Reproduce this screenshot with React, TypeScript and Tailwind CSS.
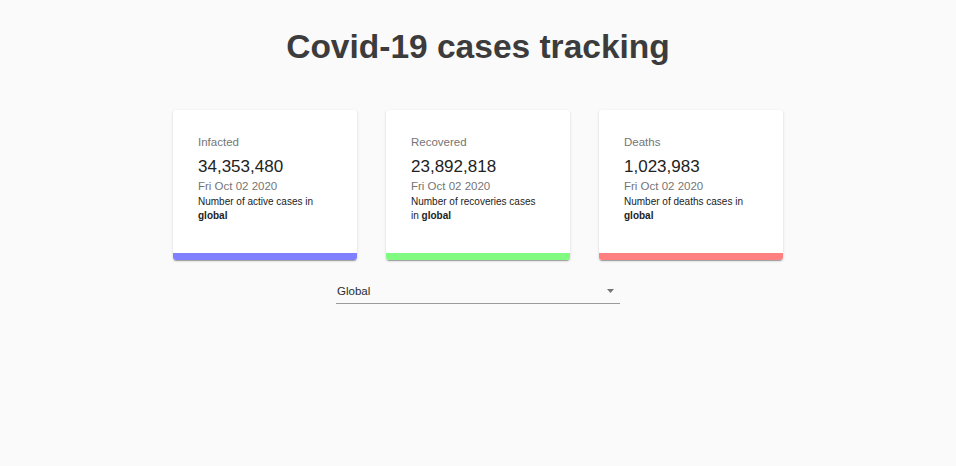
import React from "react";

const cards = [
  { label: "Infacted", value: "34,353,480", desc: "Number of active cases in", bar: "bg-[#8080ff]" },
  { label: "Recovered", value: "23,892,818", desc: "Number of recoveries cases in", bar: "bg-[#80fa80]" },
  { label: "Deaths", value: "1,023,983", desc: "Number of deaths cases in", bar: "bg-[#ff8080]" },
];

export default function App() {
  return (
    <div className="min-h-[466px] w-full bg-[#fafafa] font-['Liberation_Sans',Arial,sans-serif]">
      <div className="flex flex-col items-center pt-[26px]">
        <h1 className="text-[33.5px] leading-[41px] font-bold text-[#3c3c3c]">Covid-19 cases tracking</h1>
        <div className="mt-[43px] flex gap-[29px]">
          {cards.map((c) => (
            <div
              key={c.label}
              className="w-[184px] overflow-hidden rounded-[3px] bg-white shadow-[0px_2px_1px_-1px_rgba(0,0,0,0.2),0px_1px_1px_0px_rgba(0,0,0,0.14),0px_1px_3px_0px_rgba(0,0,0,0.12)]"
            >
              <div className="pl-[25px] pr-[31px] pt-[24px] pb-[29px]">
                <div className="text-[11.5px] leading-[17px] text-[#757575] mb-[5px]">{c.label}</div>
                <div className="text-[17px] leading-[22px] text-[#222222]">{c.value}</div>
                <div className="text-[11.5px] leading-[17px] text-[#757575]">Fri Oct 02 2020</div>
                <p className="text-[10px] leading-[14.3px] text-[#222222]">
                  {c.desc} <span className="font-bold">global</span>
                </p>
              </div>
              <div className={`h-[7px] ${c.bar}`} />
            </div>
          ))}
        </div>
        <div className="mt-[23px] w-[284px]">
          <div className="flex items-center justify-between border-b border-[#9a9a9a] pb-[3px] pl-[1px] pr-[6px]">
            <span className="text-[11.5px] leading-[17px] text-[#2a2a2a]">Global</span>
            <svg width="7" height="4" viewBox="0 0 7 4" className="mb-[1px]">
              <path d="M0 0 L7 0 L3.5 4 Z" fill="#757575" />
            </svg>
          </div>
        </div>
      </div>
    </div>
  );
}
